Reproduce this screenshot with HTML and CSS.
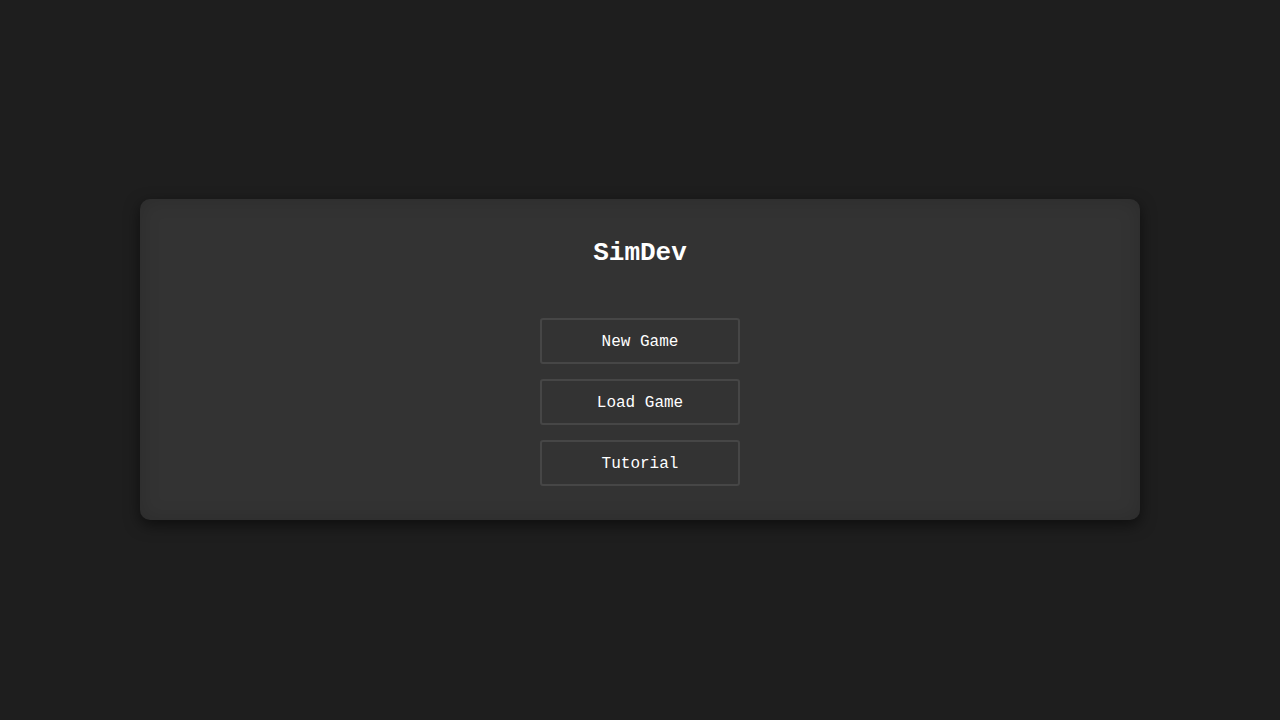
FILE: index.html
```html
<!DOCTYPE html>
<html>
<head>
<meta charset="utf-8">
<link rel="stylesheet" href="styles.css">
</head>
<body>
<div class="screen">
  <div class="panel">
    <h1 class="title">SimDev</h1>
    <div class="menu">
      <button class="btn">New Game</button>
      <button class="btn">Load Game</button>
      <button class="btn">Tutorial</button>
    </div>
  </div>
</div>
</body>
</html>
```
FILE: styles.css
```css
html, body {
  margin: 0;
  padding: 0;
  background: #1e1e1e;
  font-family: "Liberation Mono", "Courier New", monospace;
  color: #fff;
}
.screen {
  width: 1280px;
  height: 719px;
  display: flex;
  align-items: center;
  justify-content: center;
}
.panel {
  width: 1000px;
  height: 321px;
  box-sizing: border-box;
  background: #333333;
  border-radius: 10px;
  padding: 39px 20px 34px;
  box-shadow: inset 0 0 20px rgba(0,0,0,0.15), 0 5px 15px rgba(0,0,0,0.55);
  display: flex;
  flex-direction: column;
  align-items: center;
}
.title {
  margin: 0;
  font-size: 26px;
  line-height: 30px;
  font-weight: bold;
}
.menu {
  margin-top: 50px;
  display: flex;
  flex-direction: column;
  gap: 15px;
}
.btn {
  width: 200px;
  height: 46px;
  box-sizing: border-box;
  background: transparent;
  border: 2px solid #464646;
  border-radius: 3px;
  color: #fff;
  font-family: "Liberation Mono", "Courier New", monospace;
  font-size: 16px;
  padding: 1px 0 0;
}
```
